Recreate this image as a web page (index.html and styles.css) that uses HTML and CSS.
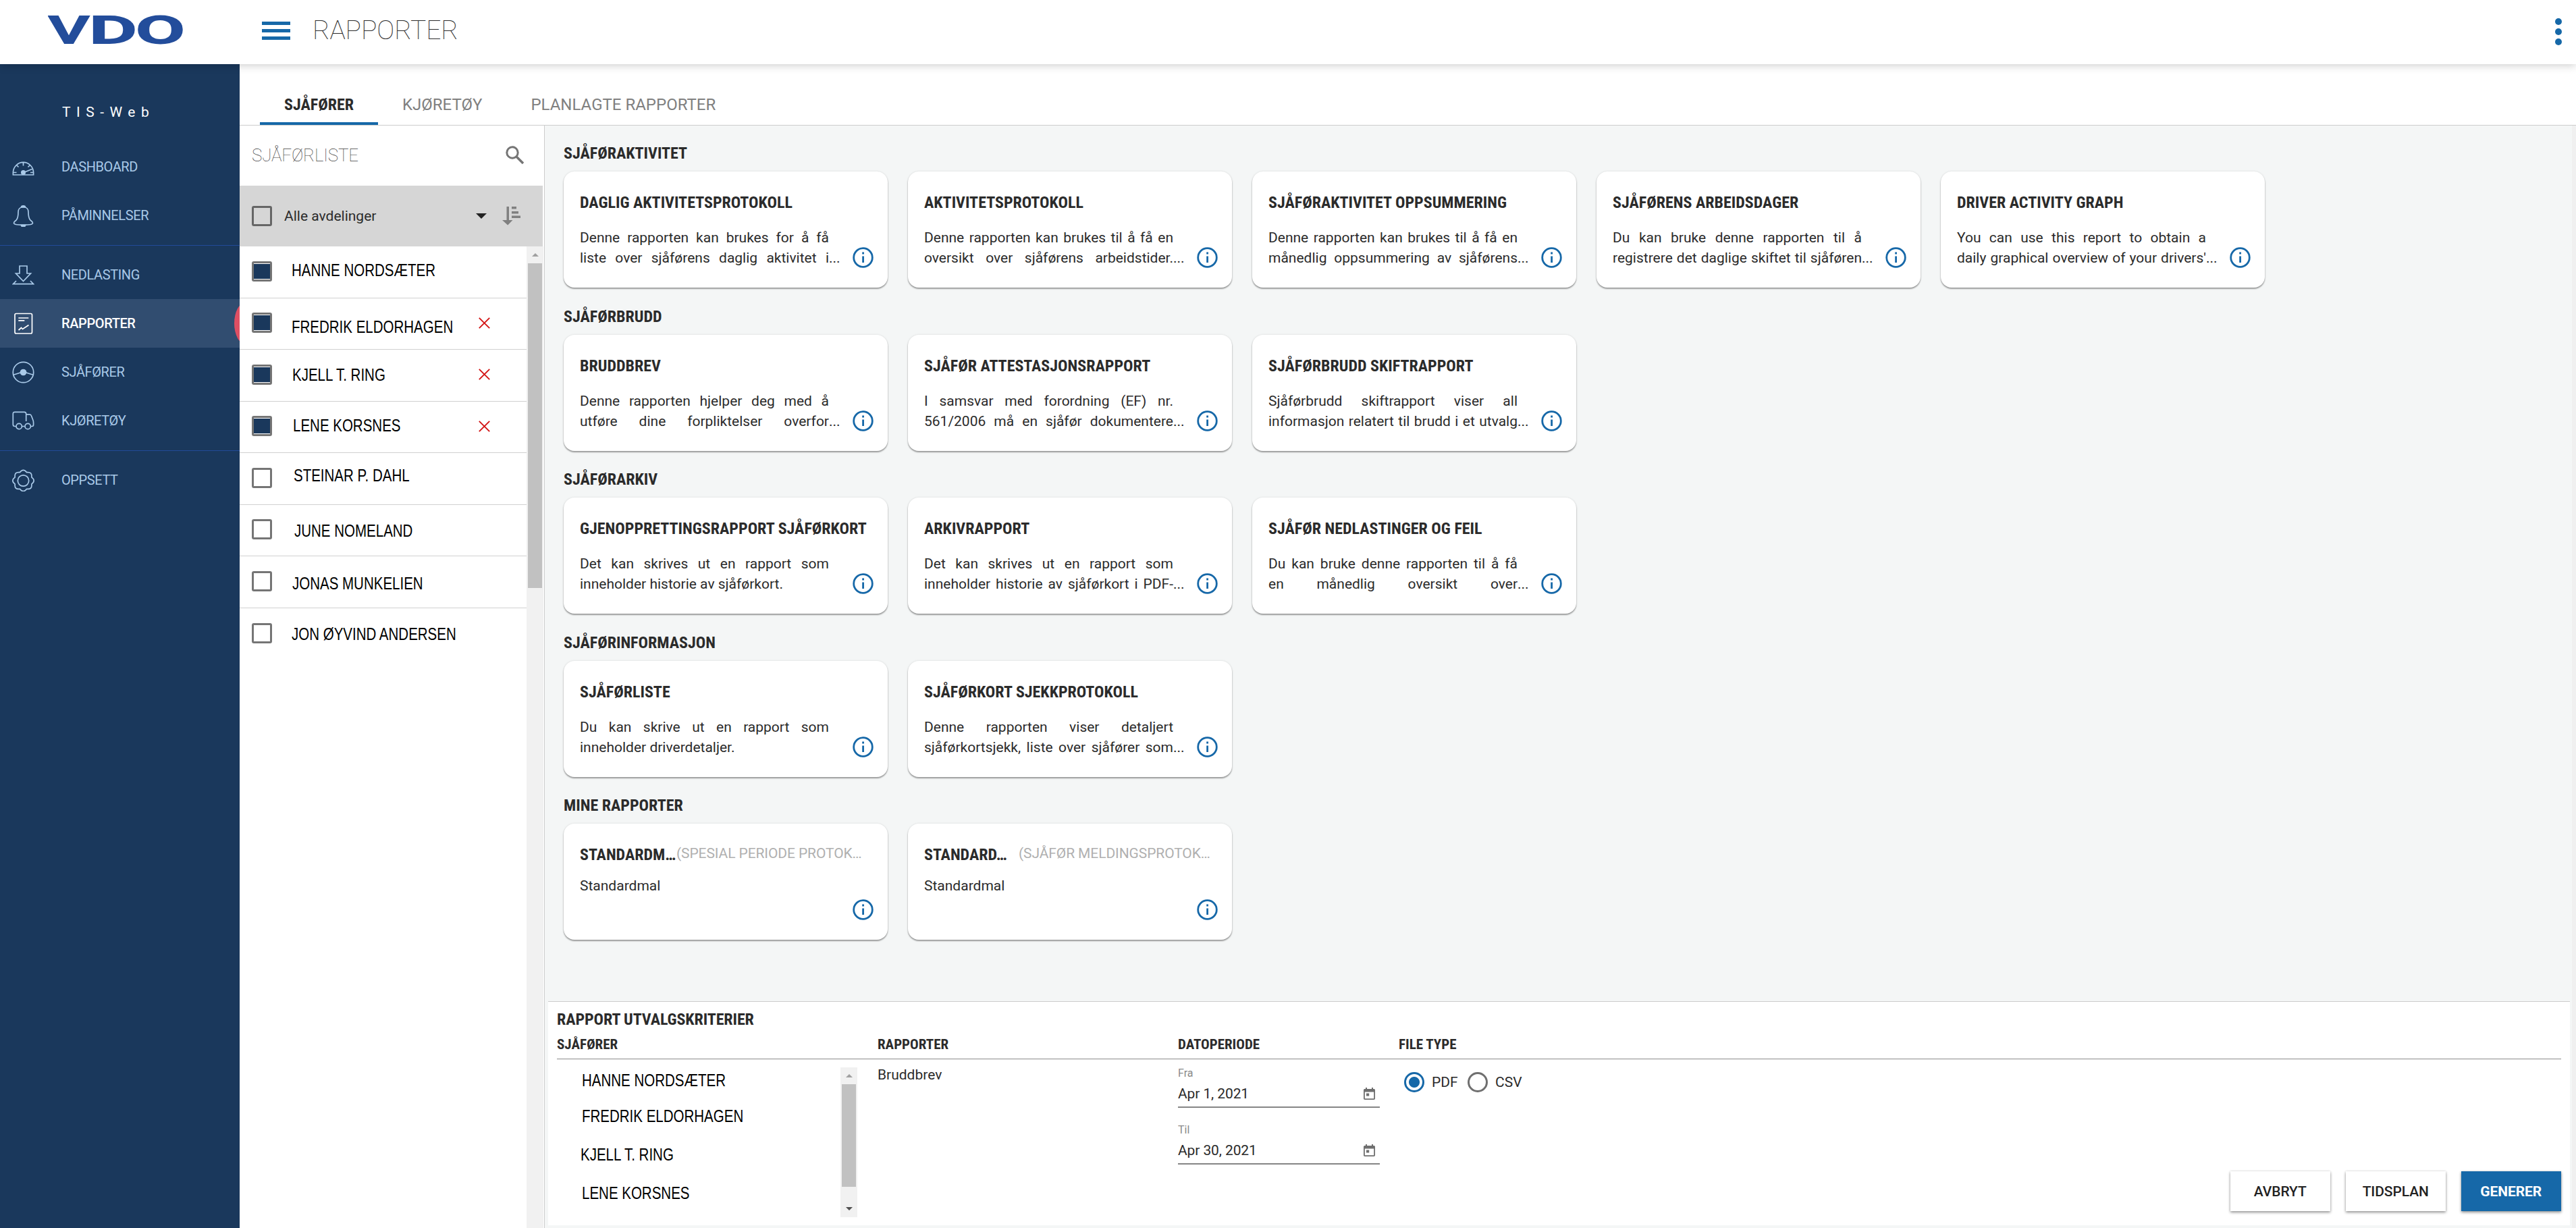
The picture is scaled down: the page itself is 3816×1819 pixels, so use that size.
FILE: index.html
```html
<!DOCTYPE html>
<html lang="no">
  <head>
    <meta charset="UTF-8" />
    <meta name="viewport" content="width=device-width, initial-scale=1.0" />
    <title>TIS-Web - Rapporter</title>
    <link rel="stylesheet" href="styles.css">
  </head>
  <body>
    <!-- Shared icons -->
    <svg class="symbols" width="0" height="0">
      <symbol id="info" viewBox="0 0 31 31">
        <circle cx="15.5" cy="15.5" r="13.8" fill="none" stroke="#1668a8" stroke-width="2.8" />
        <rect x="14.2" y="7.5" width="2.8" height="3" fill="#1668a8" />
        <rect x="14.2" y="13.5" width="2.8" height="9.5" fill="#1668a8" />
      </symbol>
      <symbol id="calendar" viewBox="0 0 17 18">
        <path d="M3 0h2v2h7V0h2v2h1.2c1 0 1.8.7 1.8 1.7v12.6c0 1-.8 1.7-1.8 1.7H1.8C.8 18 0 17.3 0 16.3V3.7C0 2.7.8 2 1.8 2H3zM1.8 6.5v9.7h13.4V6.5z" fill="#6f6f6f" />
        <rect x="4" y="8.5" width="4.2" height="4" fill="#6f6f6f" />
      </symbol>
      <symbol id="cross" viewBox="0 0 17 17">
        <path d="M.8.8l15.4 15.4M16.2.8L.8 16.2" stroke="#d31515" stroke-width="1.9" />
      </symbol>
    </svg>

    <header class="topbar">
      <div class="logo">
        <svg width="220" height="80" viewBox="0 0 220 80">
          <text x="1" y="60" textLength="60" lengthAdjust="spacingAndGlyphs">V</text>
          <text x="61" y="60" textLength="71" lengthAdjust="spacingAndGlyphs">D</text>
          <text x="130" y="60" textLength="73" lengthAdjust="spacingAndGlyphs">O</text>
        </svg>
      </div>
      <div class="hamburger"><i></i><i></i><i></i></div>
      <h1>RAPPORTER</h1>
      <div class="dots"><i></i><i></i><i></i></div>
    </header>

    <div class="page">
      <nav class="sidebar">
        <div class="product">TIS-Web</div>
        <a class="nav-item">
          <svg viewBox="0 0 33 33"><path d="M1.4 28v-3a15.1 15.6 0 0 1 30.2 0v3zM16.5 9.5v5M6.5 13.5l3 3M26.5 13.5l-3 3M2 24.5h4.5M31 24.5h-4M17 24.5l12.5-5" /><circle class="solid" cx="16.5" cy="24.5" r="2.7" /></svg>
          DASHBOARD
        </a>
        <a class="nav-item">
          <svg viewBox="0 0 33 33"><path d="M16.5 3.5c-5 0-7.5 3.5-7.5 7.5 0 7-.5 9-2.5 11.500C5 24.500 2.500 25 2.500 27.500c0 2 7 2.700 14 2.700s14-.7 14-2.700c0-2.500-2.500-3-4-5-2-2.500-2.500-4.500-2.500-11.500 0-4-2.500-7.500-7.500-7.500z" /><path class="solid" d="M13.5 4c0-3 6-3 6 0zM13.5 30.5c0 3 6 3 6 0z" /></svg>
          PÅMINNELSER
        </a>
        <hr>
        <a class="nav-item">
          <svg viewBox="0 0 33 33"><path d="M11 3h11v11h5.5L16.5 25.5 5.5 14H11zM6 25l-4.5 4.7h30L27 25" /></svg>
          NEDLASTING
        </a>
        <a class="nav-item active">
          <svg viewBox="0 0 33 33"><rect x="4" y="1.5" width="25.5" height="29.5" rx="2" /><path d="M9.3 8h15M9.3 11.8h9M9.5 26l4-3.5 2 2 9-6" /></svg>
          RAPPORTER
          <svg class="marker" viewBox="0 0 8 54"><ellipse cx="17" cy="27" rx="17" ry="31" /></svg>
        </a>
        <a class="nav-item">
          <svg viewBox="0 0 33 33"><circle cx="16.5" cy="16.5" r="15.2" /><circle class="solid" cx="16.5" cy="16.5" r="4" /><path d="M2 20.3l11-3.5M31 20.3l-11-3.5" /></svg>
          SJÅFØRER
        </a>
        <a class="nav-item">
          <svg viewBox="0 0 33 33"><path d="M6 24.5H4c-1.8 0-2.7-1-2.7-2.7V6c0-1.8 1-2.7 2.7-2.7h14c1.8 0 2.7 1 2.7 2.7v11M20.7 6.800h5c1.5 0 2.2.5 2.7 2l2.5 6.5c.6 1.5.7 2.5.7 4v3c0 1.5-.8 2.2-2 2.2h-2.2M14.5 24.5h4" /><circle cx="10.2" cy="24.5" r="4.2" /><circle cx="23.2" cy="24.5" r="4.2" /></svg>
          KJØRETØY
        </a>
        <hr>
        <a class="nav-item">
          <svg viewBox="0 0 33 33"><g transform="translate(16.5 17)"><path d="M12.3 5.1Q13.4 13.4 5.1 12.3Q0 19 -5.1 12.3Q-13.4 13.4 -12.3 5.1Q-19 0 -12.3 -5.1Q-13.4 -13.4 -5.1 -12.3Q0 -19 5.1 -12.3Q13.4 -13.4 12.3 -5.1Q19 0 12.3 5.1z" /><circle r="8.2" /></g></svg>
          OPPSETT
        </a>
      </nav>

      <main class="main">
        <div class="tabs">
          <a class="tab selected">SJÅFØRER</a>
          <a class="tab">KJØRETØY</a>
          <a class="tab">PLANLAGTE RAPPORTER</a>
        </div>

        <div class="workspace">
          <section class="driver-panel">
            <div class="search">
              <span>SJÅFØRLISTE</span>
              <svg width="28" height="28" viewBox="0 0 28 28"><circle cx="10" cy="10" r="8.2" fill="none" stroke="#757575" stroke-width="3" /><path d="M16 16l10 10" stroke="#757575" stroke-width="3.6" /></svg>
            </div>
            <div class="department">
              <span class="checkbox"></span>
              <span class="department-name">Alle avdelinger</span>
              <svg width="16" height="8" viewBox="0 0 16 8"><path d="M0 0h16L8 8z" fill="#222" /></svg>
              <svg class="sort" width="28" height="28" viewBox="0 0 28 28"><path d="M6.5 0H10v20h5.5l-7.300 7.500L0 20h6.500zM14 0h7v3.500h-7zM14 7h10v3.500H14zM14 13.500h13V17H14z" fill="#808080" /></svg>
            </div>
            <div class="drivers">
              <ul>
                <li><span class="checkbox checked"></span><span class="name">HANNE NORDSÆTER</span></li>
                <li><span class="checkbox checked"></span><span class="name">FREDRIK ELDORHAGEN</span><svg class="cross"><use href="#cross" /></svg></li>
                <li><span class="checkbox checked"></span><span class="name">KJELL T. RING</span><svg class="cross"><use href="#cross" /></svg></li>
                <li><span class="checkbox checked"></span><span class="name">LENE KORSNES</span><svg class="cross"><use href="#cross" /></svg></li>
                <li><span class="checkbox"></span><span class="name">STEINAR P. DAHL</span></li>
                <li><span class="checkbox"></span><span class="name">JUNE NOMELAND</span></li>
                <li><span class="checkbox"></span><span class="name">JONAS MUNKELIEN</span></li>
                <li><span class="checkbox"></span><span class="name">JON ØYVIND ANDERSEN</span></li>
              </ul>
              <div class="scrollbar">
                <span class="arrow-up"></span>
                <span class="thumb"></span>
              </div>
            </div>
          </section>

          <section class="content">
            <div class="reports">
              <h2>SJÅFØRAKTIVITET</h2>
              <div class="cards">
                <article class="card">
                  <h3>DAGLIG AKTIVITETSPROTOKOLL</h3>
                  <div class="card-body">
                    <p><span class="fill">Denne rapporten kan brukes for å få</span><span class="fill more">liste over sjåførens daglig aktivitet i</span></p>
                    <svg class="info"><use href="#info" /></svg>
                  </div>
                </article>
                <article class="card">
                  <h3>AKTIVITETSPROTOKOLL</h3>
                  <div class="card-body">
                    <p><span class="fill">Denne rapporten kan brukes til å få en</span><span class="fill more">oversikt over sjåførens arbeidstider.</span></p>
                    <svg class="info"><use href="#info" /></svg>
                  </div>
                </article>
                <article class="card">
                  <h3>SJÅFØRAKTIVITET OPPSUMMERING</h3>
                  <div class="card-body">
                    <p><span class="fill">Denne rapporten kan brukes til å få en</span><span class="fill more">månedlig oppsummering av sjåførens</span></p>
                    <svg class="info"><use href="#info" /></svg>
                  </div>
                </article>
                <article class="card">
                  <h3>SJÅFØRENS ARBEIDSDAGER</h3>
                  <div class="card-body">
                    <p><span class="fill">Du kan bruke denne rapporten til å</span><span class="fill more">registrere det daglige skiftet til sjåføren</span></p>
                    <svg class="info"><use href="#info" /></svg>
                  </div>
                </article>
                <article class="card">
                  <h3>DRIVER ACTIVITY GRAPH</h3>
                  <div class="card-body">
                    <p><span class="fill">You can use this report to obtain a</span><span class="fill more">daily graphical overview of your drivers'</span></p>
                    <svg class="info"><use href="#info" /></svg>
                  </div>
                </article>
              </div>

              <h2>SJÅFØRBRUDD</h2>
              <div class="cards">
                <article class="card">
                  <h3>BRUDDBREV</h3>
                  <div class="card-body">
                    <p><span class="fill">Denne rapporten hjelper deg med å</span><span class="fill more">utføre dine forpliktelser overfor</span></p>
                    <svg class="info"><use href="#info" /></svg>
                  </div>
                </article>
                <article class="card">
                  <h3>SJÅFØR ATTESTASJONSRAPPORT</h3>
                  <div class="card-body">
                    <p><span class="fill">I samsvar med forordning (EF) nr.</span><span class="fill more">561/2006 må en sjåfør dokumentere</span></p>
                    <svg class="info"><use href="#info" /></svg>
                  </div>
                </article>
                <article class="card">
                  <h3>SJÅFØRBRUDD SKIFTRAPPORT</h3>
                  <div class="card-body">
                    <p><span class="fill">Sjåførbrudd skiftrapport viser all</span><span class="fill more">informasjon relatert til brudd i et utvalg</span></p>
                    <svg class="info"><use href="#info" /></svg>
                  </div>
                </article>
              </div>

              <h2>SJÅFØRARKIV</h2>
              <div class="cards">
                <article class="card">
                  <h3>GJENOPPRETTINGSRAPPORT SJÅFØRKORT</h3>
                  <div class="card-body">
                    <p><span class="fill">Det kan skrives ut en rapport som</span>inneholder historie av sjåførkort.</p>
                    <svg class="info"><use href="#info" /></svg>
                  </div>
                </article>
                <article class="card">
                  <h3>ARKIVRAPPORT</h3>
                  <div class="card-body">
                    <p><span class="fill">Det kan skrives ut en rapport som</span><span class="fill more">inneholder historie av sjåførkort i PDF-</span></p>
                    <svg class="info"><use href="#info" /></svg>
                  </div>
                </article>
                <article class="card">
                  <h3>SJÅFØR NEDLASTINGER OG FEIL</h3>
                  <div class="card-body">
                    <p><span class="fill">Du kan bruke denne rapporten til å få</span><span class="fill more">en månedlig oversikt over</span></p>
                    <svg class="info"><use href="#info" /></svg>
                  </div>
                </article>
              </div>

              <h2>SJÅFØRINFORMASJON</h2>
              <div class="cards">
                <article class="card">
                  <h3>SJÅFØRLISTE</h3>
                  <div class="card-body">
                    <p><span class="fill">Du kan skrive ut en rapport som</span>inneholder driverdetaljer.</p>
                    <svg class="info"><use href="#info" /></svg>
                  </div>
                </article>
                <article class="card">
                  <h3>SJÅFØRKORT SJEKKPROTOKOLL</h3>
                  <div class="card-body">
                    <p><span class="fill">Denne rapporten viser detaljert</span><span class="fill more">sjåførkortsjekk, liste over sjåfører som</span></p>
                    <svg class="info"><use href="#info" /></svg>
                  </div>
                </article>
              </div>

              <h2>MINE RAPPORTER</h2>
              <div class="cards">
                <article class="card custom">
                  <h3><span>STANDARDM…</span><small>(SPESIAL PERIODE PROTOK…</small></h3>
                  <div class="card-body">
                    <p>Standardmal</p>
                    <svg class="info"><use href="#info" /></svg>
                  </div>
                </article>
                <article class="card custom">
                  <h3><span>STANDARD…</span><small>(SJÅFØR MELDINGSPROTOK…</small></h3>
                  <div class="card-body">
                    <p>Standardmal</p>
                    <svg class="info"><use href="#info" /></svg>
                  </div>
                </article>
              </div>
            </div>

            <!-- Selection criteria for the chosen report -->
            <div class="criteria">
              <h2>RAPPORT UTVALGSKRITERIER</h2>
              <div class="columns heads">
                <span>SJÅFØRER</span>
                <span>RAPPORTER</span>
                <span>DATOPERIODE</span>
                <span>FILE TYPE</span>
              </div>
              <hr>
              <div class="columns values">
                <div class="chosen">
                  <ul>
                    <li><span class="name">HANNE NORDSÆTER</span></li>
                    <li><span class="name">FREDRIK ELDORHAGEN</span></li>
                    <li><span class="name">KJELL T. RING</span></li>
                    <li><span class="name">LENE KORSNES</span></li>
                  </ul>
                  <div class="scrollbar">
                    <span class="arrow-up"></span>
                    <span class="thumb"></span>
                    <span class="arrow-down"></span>
                  </div>
                </div>
                <div class="chosen-report">Bruddbrev</div>
                <div class="dates">
                  <label>Fra</label>
                  <div class="date"><span>Apr 1, 2021</span><svg class="calendar"><use href="#calendar" /></svg></div>
                  <label>Til</label>
                  <div class="date"><span>Apr 30, 2021</span><svg class="calendar"><use href="#calendar" /></svg></div>
                </div>
                <div class="output">
                  <div class="file-type">
                    <span class="radio on"></span><span>PDF</span>
                    <span class="radio"></span><span>CSV</span>
                  </div>
                  <div class="actions">
                    <button>AVBRYT</button>
                    <button>TIDSPLAN</button>
                    <button class="primary">GENERER</button>
                  </div>
                </div>
              </div>
            </div>
          </section>
        </div>
      </main>
    </div>
  </body>
</html>
```
FILE: styles.css
```css
* {
  box-sizing: border-box;
}

body {
  margin: 0;
  height: 1819px;
  overflow: hidden;
  display: flex;
  flex-direction: column;
  font-family: Roboto, sans-serif;
  font-size: 21px;
  color: #2b2b2b;
  background-color: white;
}

ul {
  list-style: none;
  margin: 0;
  padding: 0;
}

h1, h2, h3, p {
  margin: 0;
}

svg {
  display: block;
  flex-shrink: 0;
}

.symbols {
  position: absolute;
}

/* Top bar */
.topbar {
  position: relative;
  z-index: 2;
  flex-shrink: 0;
  height: 95px;
  display: flex;
  align-items: flex-start;
  background-color: white;
  box-shadow: 0 2px 12px rgba(0, 0, 0, 0.2);
}

.logo {
  width: 388px;
  padding: 4px 0 0 71px;
}

.logo text {
  font: 500 55px Roboto, sans-serif;
  fill: #234d9b;
  stroke: #234d9b;
  stroke-width: 2;
}

.hamburger {
  width: 42px;
  margin-top: 32px;
  display: flex;
  flex-direction: column;
  gap: 6px;
}

.hamburger i {
  height: 5px;
  background-color: #1668a8;
}

.topbar h1 {
  margin-left: 33px;
  font-size: 39px;
  font-weight: 100;
  line-height: 91px;
  letter-spacing: -0.1px;
}

.dots {
  margin: 27px 21px 0 auto;
  display: flex;
  flex-direction: column;
  gap: 5px;
}

.dots i {
  width: 10px;
  height: 10px;
  border-radius: 50%;
  background-color: #1668a8;
}

.page {
  flex: 1;
  min-height: 0;
  display: flex;
}

/* Sidebar */
.sidebar {
  width: 355px;
  flex-shrink: 0;
  background-color: #1a385c;
}

.product {
  height: 116px;
  padding: 26px 0 0 92px;
  line-height: 90px;
  letter-spacing: 8.5px;
  color: white;
}

.nav-item {
  position: relative;
  height: 72px;
  padding-left: 18px;
  display: flex;
  align-items: center;
  gap: 40px;
  font-size: 20px;
  letter-spacing: -0.4px;
  color: #a9c9e8;
}

.nav-item svg {
  width: 33px;
  height: 33px;
  fill: none;
  stroke: #a9c9e8;
  stroke-width: 1.7;
}

.nav-item .solid {
  fill: #a9c9e8;
}

.nav-item.active {
  background-color: #314d70;
  color: white;
  font-weight: 500;
}

.nav-item.active svg {
  stroke: white;
}

.nav-item.active .marker {
  position: absolute;
  right: 0;
  top: 9px;
  width: 8px;
  height: 54px;
  fill: #de4f63;
  stroke: none;
}

.sidebar hr {
  margin: 8px 0 7px;
  border: none;
  border-top: 1px solid #214a99;
}

/* Tabs */
.main {
  flex: 1;
  min-width: 0;
  display: flex;
  flex-direction: column;
}

.tabs {
  height: 91px;
  flex-shrink: 0;
  padding: 30px 0 0 30px;
  display: flex;
  border-bottom: 1px solid #ccc;
}

.tab {
  padding: 0 36px;
  font-size: 24px;
  line-height: 60px;
  color: #808080;
}

.tab.selected {
  height: 60px;
  border-bottom: 4px solid #1668a8;
  font-weight: 700;
  font-stretch: 75%;
  color: #2b2b2b;
}

.workspace {
  flex: 1;
  min-height: 0;
  display: flex;
}

/* Driver list */
.driver-panel {
  width: 452px;
  flex-shrink: 0;
  display: flex;
  flex-direction: column;
  border-right: 1px solid #ccc;
}

.search {
  height: 89px;
  padding: 0 29px 1px 18px;
  display: flex;
  align-items: center;
  justify-content: space-between;
  font-size: 26px;
  font-weight: 100;
  letter-spacing: -0.2px;
  color: #444;
}

.department {
  height: 90px;
  margin-right: 2px;
  padding-left: 18px;
  display: flex;
  align-items: center;
  background-color: #d6d6d6;
}

.department-name {
  width: 284px;
  margin-left: 18px;
}

.sort {
  margin-left: 23px;
}

.checkbox {
  width: 30px;
  height: 30px;
  flex-shrink: 0;
  border: 3px solid #757575;
  border-radius: 3px;
}

.department .checkbox {
  border-color: #666;
}

.checkbox.checked {
  padding: 1px 0;
  background-color: #1a385c;
  background-clip: content-box;
}

.drivers {
  flex: 1;
  display: flex;
}

.drivers ul {
  width: 425px;
}

.drivers li {
  height: 76.5px;
  padding: 0 0 2px 18px;
  display: flex;
  align-items: center;
  border-bottom: 1px solid #d0d0d0;
}

.drivers li:last-child {
  border-bottom: none;
}

.name {
  display: block;
  font: 25px/30px "Liberation Sans", Arial, sans-serif;
  white-space: nowrap;
  color: black;
  transform: scaleX(0.82);
  transform-origin: left;
}

.drivers .name {
  width: 277px;
  margin-left: 29px;
}

/* names sit slightly off the row centre */
.drivers li:nth-child(1) .name { margin-top: -3px; }
.drivers li:nth-child(2) .name { margin-top: 12px; }
.drivers li:nth-child(3) .name { margin-left: 30px; width: 276px; }
.drivers li:nth-child(4) .name { margin-left: 31px; width: 275px; margin-top: -3px; }
.drivers li:nth-child(5) .name { margin-left: 32px; margin-top: -8px; }
.drivers li:nth-child(6) .name { margin-left: 33px; margin-top: 4px; }
.drivers li:nth-child(7) .name { margin-left: 30px; margin-top: 6px; }
.drivers li:nth-child(8) .name { margin-top: 2px; }

.cross {
  width: 17px;
  height: 17px;
}

.scrollbar {
  width: 25px;
  padding: 10px 2px;
  display: flex;
  flex-direction: column;
  align-items: center;
  background-color: #f1f1f1;
}

.arrow-up {
  border: 5px solid transparent;
  border-top: none;
  border-bottom-color: #a0a0a0;
}

.arrow-down {
  margin-top: auto;
  border: 5px solid transparent;
  border-bottom: none;
  border-top-color: #505050;
}

.thumb {
  width: 21px;
  height: 481px;
  margin-top: 10px;
  background-color: #c1c1c1;
}

/* Reports */
.content {
  flex: 1;
  min-width: 0;
  display: flex;
  flex-direction: column;
  background-color: #f4f6f6;
  border-right: 6px solid #f0f0f0;
}

.reports {
  flex: 1;
  padding: 26px 28px 0;
}

.content h2 {
  font-size: 24px;
  line-height: 30px;
  font-weight: 700;
  font-stretch: 75%;
}

.cards {
  display: flex;
  gap: 30px;
  margin: 12px 0 27.5px;
}

.card {
  width: 480px;
  height: 172px;
  padding: 31px 20px 0 24px;
  border-radius: 16px;
  background-color: white;
  box-shadow: 0 2px 2px rgba(0, 0, 0, 0.35), 0 0 3px rgba(0, 0, 0, 0.12);
}

.card h3 {
  display: flex;
  font-size: 24px;
  line-height: 30px;
  font-weight: 700;
  font-stretch: 75%;
  white-space: nowrap;
}

.card-body {
  margin-top: 22px;
  height: 60px;
  display: flex;
  align-items: flex-end;
  gap: 35px;
}

.card p {
  width: 369px;
  line-height: 30px;
}

.fill {
  position: relative;
  display: block;
  text-align-last: justify;
  white-space: nowrap;
}

.more::after {
  content: "...";
  position: absolute;
  left: 369px;
}

.info {
  width: 31px;
  height: 31px;
}

.custom h3 span {
  width: 143px;
}

.custom + .custom h3 span {
  width: 140px;
}

.custom small {
  font-size: 21px;
  font-weight: 400;
  font-stretch: 100%;
  line-height: 26px;
  letter-spacing: -0.1px;
  color: #b0b0b0;
}

.custom .card-body {
  margin-top: 16px;
  height: 66px;
}

.custom p {
  align-self: flex-start;
}

/* Criteria panel */
.criteria {
  height: 332px;
  margin: 0 3px 4px 5px;
  padding: 11px 13px 0;
  display: flex;
  flex-direction: column;
  border-top: 1px solid #ccc;
  background-color: white;
}

.criteria h2 {
  letter-spacing: -0.1px;
}

.criteria hr {
  width: 100%;
  margin: 6px 0 0;
  border: none;
  border-top: 1px solid #999;
  border-bottom: 1px solid #eee;
}

.columns {
  display: grid;
  grid-template-columns: 475px 445px 327px 1fr;
}

.heads {
  margin-top: 7px;
  line-height: 30px;
  font-weight: 700;
  font-stretch: 75%;
}

.values {
  flex: 1;
}

.chosen {
  width: 445px;
  height: 222px;
  margin-top: 11px;
  display: flex;
  justify-content: space-between;
}

.chosen ul {
  padding: 4px 0 0 37px;
}

.chosen li {
  height: 57px;
}

.chosen li:nth-child(1) {
  height: 53px;
}

.chosen li:nth-child(3) {
  margin-left: -2px;
}

.chosen .thumb {
  height: 152px;
}

.chosen-report {
  padding-top: 7px;
  line-height: 30px;
}

.dates {
  width: 299px;
  padding-top: 10px;
}

.dates label {
  display: block;
  font-size: 16px;
  line-height: 20px;
  color: #8a8a8a;
}

.date {
  height: 38px;
  margin: 3px 0 23px;
  padding: 3px 7px 0 0;
  display: flex;
  justify-content: space-between;
  border-bottom: 2px solid #858585;
  line-height: 29px;
  letter-spacing: -0.1px;
}

.calendar {
  width: 17px;
  height: 18px;
  margin-top: 5px;
}

.output {
  display: flex;
  justify-content: space-between;
}

.file-type {
  height: 30px;
  margin: 18px 0 0 8px;
  display: flex;
  align-items: center;
}

.file-type span:not(.radio) {
  width: 53px;
  margin-left: 11px;
}

.file-type .radio {
  width: 30px;
  height: 30px;
  border: 3px solid #6f6f6f;
  border-radius: 50%;
}

.file-type .radio.on {
  border-color: #1668a8;
  background: radial-gradient(#1668a8 7.5px, white 8.5px);
}

.actions {
  align-self: flex-end;
  margin-bottom: 21px;
  display: flex;
  gap: 22.5px;
}

button {
  width: 148.5px;
  height: 59px;
  padding: 0;
  border: none;
  font: 500 21px Roboto, sans-serif;
  letter-spacing: -0.1px;
  color: #222;
  background-color: white;
  box-shadow: 0 2px 4px rgba(0, 0, 0, 0.4), 0 0 3px rgba(0, 0, 0, 0.12);
}

button.primary {
  font-weight: 700;
  color: white;
  background-color: #1668a8;
}
```
